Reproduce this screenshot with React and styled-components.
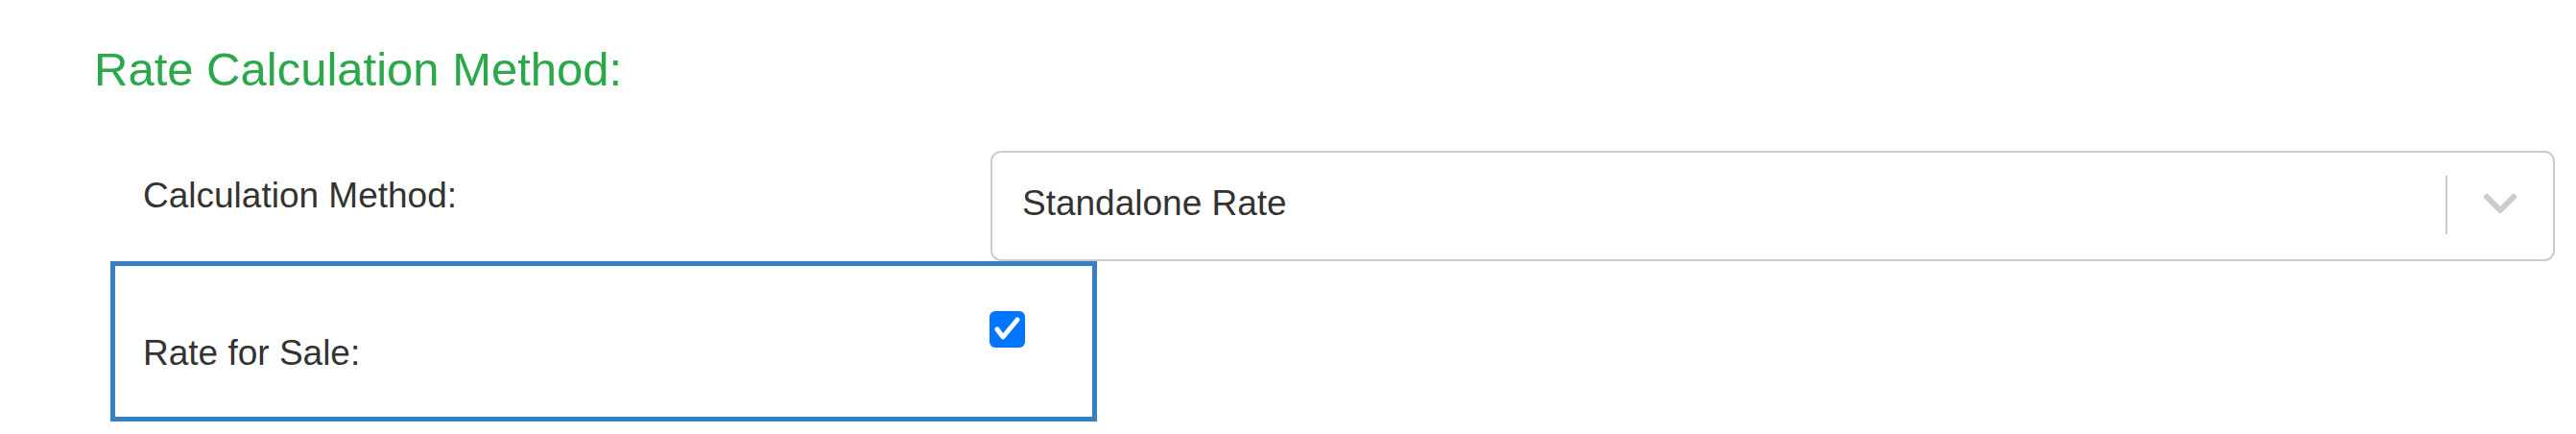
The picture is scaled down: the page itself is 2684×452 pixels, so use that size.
import React from 'react';
import styled, { createGlobalStyle } from 'styled-components';

const GlobalStyle = createGlobalStyle`
  html, body {
    margin: 0;
    padding: 0;
    background: #ffffff;
  }
  body {
    font-family: "Liberation Sans", Arial, sans-serif;
    color: #333333;
  }
`;

const Page = styled.div`
  padding: 45px 22px 0 98px;
`;

const Heading = styled.h2`
  margin: 0;
  font-size: 49px;
  line-height: 55px;
  font-weight: 400;
  color: #2aa84a;
`;

const Form = styled.div`
  margin: 57px 0 0 17px;
  display: flex;
  flex-direction: column;
  align-items: flex-start;
`;

const Row = styled.div`
  display: grid;
  grid-template-columns: ${({ labelWidth }) => labelWidth}px 1fr;
  width: ${({ fill }) => (fill ? '100%' : 'auto')};
  box-sizing: border-box;
`;

const FocusRow = styled(Row)`
  width: 1028px;
  height: 167px;
  border: 5px solid #3480c2;
`;

const Label = styled.label`
  padding: ${({ top }) => top}px 0 0 ${({ left }) => left}px;
  font-size: 37px;
  line-height: 43px;
  color: #333333;
`;

const SelectBox = styled.div`
  display: flex;
  align-items: center;
  height: 115px;
  box-sizing: border-box;
  border: 2px solid #cccccc;
  border-radius: 11px;
  background: #ffffff;
`;

const SelectValue = styled.div`
  flex: 1;
  padding: 0 0 6px 31px;
  font-size: 37px;
  line-height: 43px;
  color: #333333;
`;

const Separator = styled.span`
  align-self: stretch;
  width: 2px;
  margin: 24px 0 26px;
  background: #cccccc;
`;

const Indicator = styled.div`
  width: 110px;
  display: flex;
  justify-content: center;
  align-items: center;
  padding-bottom: 6px;
`;

const CheckCell = styled.div`
  padding-top: 47px;
`;

const HiddenInput = styled.input`
  position: absolute;
  opacity: 0;
  width: 0;
  height: 0;
  margin: 0;
`;

const CheckBox = styled.span`
  display: flex;
  align-items: center;
  justify-content: center;
  width: 37px;
  height: 38px;
  border-radius: 6px;
  background: ${({ checked }) => (checked ? '#0075ff' : '#ffffff')};
`;

const Chevron = () => (
  <svg width="36" height="22" viewBox="0 0 36 22">
    <path d="M4 4 L18 18 L32 4" fill="none" stroke="#cccccc" strokeWidth="6" strokeLinecap="round" strokeLinejoin="round" />
  </svg>
);

const CheckMark = () => (
  <svg width="37" height="38" viewBox="0 0 37 38">
    <path d="M8 19 L14 27 L29 9" fill="none" stroke="#ffffff" strokeWidth="5" strokeLinecap="round" strokeLinejoin="round" />
  </svg>
);

export default function App() {
  const [forSale, setForSale] = React.useState(true);

  return (
    <Page>
      <GlobalStyle />
      <Heading>Rate Calculation Method:</Heading>
      <Form>
        <Row labelWidth={917} fill>
          <Label top={25} left={34}>Calculation Method:</Label>
          <SelectBox>
            <SelectValue>Standalone Rate</SelectValue>
            <Separator />
            <Indicator>
              <Chevron />
            </Indicator>
          </SelectBox>
        </Row>
        <FocusRow labelWidth={911}>
          <Label top={69} left={29} htmlFor="rate-for-sale">Rate for Sale:</Label>
          <CheckCell>
            <label>
              <HiddenInput
                id="rate-for-sale"
                type="checkbox"
                checked={forSale}
                onChange={(e) => setForSale(e.target.checked)}
              />
              <CheckBox checked={forSale}>{forSale && <CheckMark />}</CheckBox>
            </label>
          </CheckCell>
        </FocusRow>
      </Form>
    </Page>
  );
}
